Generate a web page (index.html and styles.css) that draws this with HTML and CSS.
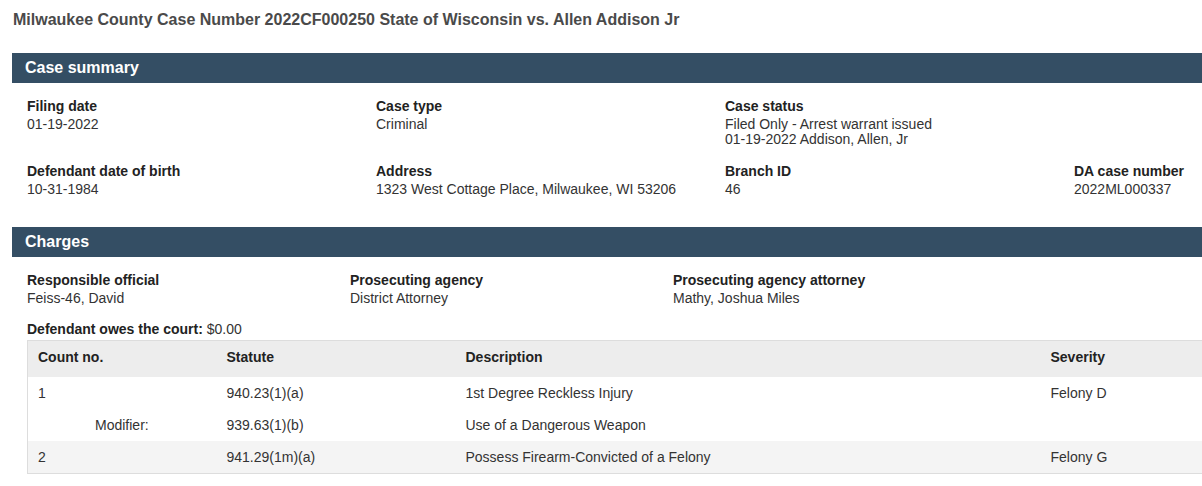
FILE: index.html
```html
<!DOCTYPE html>
<html lang="en">
<head>
    <meta charset="UTF-8">
    <meta name="viewport" content="width=device-width, initial-scale=1.0">
    <title>Case 2022CF000250</title>
    <link rel="stylesheet" href="styles.css">
</head>
<body>
    <div class="page">
        <h1 class="case-title">Milwaukee County Case Number 2022CF000250 State of Wisconsin vs. Allen Addison Jr</h1>

        <section class="panel">
            <h2 class="panel-header">Case summary</h2>
            <div class="panel-body">
                <div class="summary-grid">
                    <div class="field">
                        <span class="field-label">Filing date</span>
                        <span class="field-value">01-19-2022</span>
                    </div>
                    <div class="field">
                        <span class="field-label">Case type</span>
                        <span class="field-value">Criminal</span>
                    </div>
                    <div class="field">
                        <span class="field-label">Case status</span>
                        <span class="field-value">Filed Only - Arrest warrant issued<br>01-19-2022 Addison, Allen, Jr</span>
                    </div>
                    <div class="field"></div>

                    <div class="field">
                        <span class="field-label">Defendant date of birth</span>
                        <span class="field-value">10-31-1984</span>
                    </div>
                    <div class="field">
                        <span class="field-label">Address</span>
                        <span class="field-value">1323 West Cottage Place, Milwaukee, WI 53206</span>
                    </div>
                    <div class="field">
                        <span class="field-label">Branch ID</span>
                        <span class="field-value">46</span>
                    </div>
                    <div class="field">
                        <span class="field-label">DA case number</span>
                        <span class="field-value">2022ML000337</span>
                    </div>
                </div>
            </div>
        </section>

        <section class="panel">
            <h2 class="panel-header">Charges</h2>
            <div class="panel-body">
                <div class="charges-grid">
                    <div class="field">
                        <span class="field-label">Responsible official</span>
                        <span class="field-value">Feiss-46, David</span>
                    </div>
                    <div class="field">
                        <span class="field-label">Prosecuting agency</span>
                        <span class="field-value">District Attorney</span>
                    </div>
                    <div class="field">
                        <span class="field-label">Prosecuting agency attorney</span>
                        <span class="field-value">Mathy, Joshua Miles</span>
                    </div>
                </div>

                <p class="owes"><strong>Defendant owes the court:</strong> $0.00</p>

                <table class="charges-table">
                    <colgroup>
                        <col class="col-count">
                        <col class="col-statute">
                        <col class="col-desc">
                        <col class="col-severity">
                    </colgroup>
                    <thead>
                        <tr>
                            <th>Count no.</th>
                            <th>Statute</th>
                            <th>Description</th>
                            <th>Severity</th>
                        </tr>
                    </thead>
                    <tbody>
                        <tr>
                            <td>1</td>
                            <td>940.23(1)(a)</td>
                            <td>1st Degree Reckless Injury</td>
                            <td>Felony D</td>
                        </tr>
                        <tr>
                            <td class="modifier">Modifier:</td>
                            <td>939.63(1)(b)</td>
                            <td>Use of a Dangerous Weapon</td>
                            <td></td>
                        </tr>
                        <tr class="alt">
                            <td>2</td>
                            <td>941.29(1m)(a)</td>
                            <td>Possess Firearm-Convicted of a Felony</td>
                            <td>Felony G</td>
                        </tr>
                    </tbody>
                </table>
            </div>
        </section>
    </div>
</body>
</html>
```

FILE: styles.css
```css
html, body {
    overflow: hidden;
}

body {
    margin: 0;
    font-family: 'Liberation Sans', Arial, sans-serif;
    font-size: 14px;
    color: #333;
    background-color: #fff;
}

.page {
    width: 1426px;
    padding-left: 12px;
}

.case-title {
    margin: 0;
    padding: 10px 0 0 1px;
    height: 53px;
    box-sizing: border-box;
    font-size: 16px;
    line-height: 20px;
    font-weight: bold;
    color: #4a4a4a;
}

.panel {
    margin-bottom: 30px;
}

.panel-header {
    margin: 0;
    height: 30px;
    padding-left: 13px;
    background-color: #344e64;
    color: #fff;
    font-size: 16px;
    line-height: 30px;
    font-weight: bold;
}

.panel-body {
    padding: 13px 0 0 15px;
}

.summary-grid {
    display: grid;
    grid-template-columns: repeat(4, 349px);
    row-gap: 14px;
}

.charges-grid {
    display: grid;
    grid-template-columns: repeat(3, 323px);
}

.field-label {
    display: block;
    font-weight: bold;
    line-height: 21px;
    color: #222;
}

.field-value {
    display: block;
    line-height: 15px;
}

.owes {
    margin: 13px 0 0;
    line-height: 21px;
}

.owes strong {
    color: #222;
}

.charges-table {
    border-collapse: collapse;
    table-layout: fixed;
    width: 1396px;
    border: 1px solid #ddd;
}

.col-count { width: 189px; }
.col-statute { width: 239px; }
.col-desc { width: 585px; }

.charges-table th {
    text-align: left;
    font-weight: bold;
    color: #222;
    background-color: #ededed;
    padding: 6px 10px 10px;
    line-height: 20px;
}

.charges-table td {
    padding: 6px 10px;
    line-height: 20px;
}

.charges-table td.modifier {
    padding-left: 67px;
}

.charges-table tr.alt td {
    background-color: #f4f4f4;
}
```
